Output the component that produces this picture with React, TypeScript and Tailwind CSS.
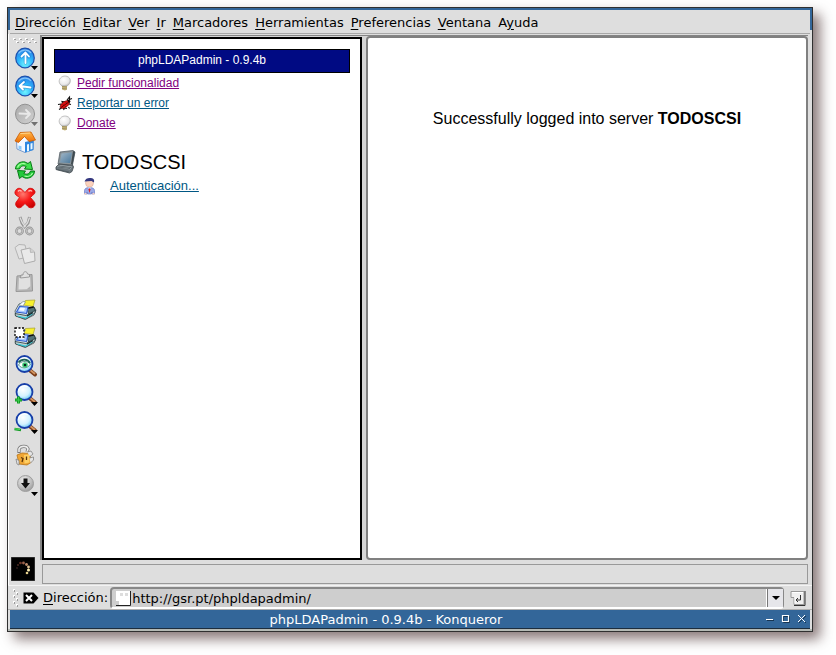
import { ReactNode } from 'react'

interface propIcon {
    children: ReactNode;
    menu?: boolean;
    disabled?: boolean;
}

interface tool {
    name: string;
    icon: ReactNode;
    disabled?: boolean;
}

const menus = [
    { before: '', key: 'D', after: 'irección' },
    { before: '', key: 'E', after: 'ditar' },
    { before: '', key: 'V', after: 'er' },
    { before: '', key: 'I', after: 'r' },
    { before: '', key: 'M', after: 'arcadores' },
    { before: '', key: 'H', after: 'erramientas' },
    { before: '', key: 'P', after: 'referencias' },
    { before: '', key: 'V', after: 'entana' },
    { before: 'A', key: 'y', after: 'uda' },
]

// Degradados que comparten los iconos
function Gradients() {
    return (
        <svg width="0" height="0" className="absolute" aria-hidden="true">
            <defs>
                <radialGradient id="blueBall" cx="0.5" cy="0.8" r="0.8">
                    <stop offset="0" stopColor="#6ff4ff" />
                    <stop offset="0.5" stopColor="#2cb4fb" />
                    <stop offset="1" stopColor="#2a78e4" />
                </radialGradient>
                <linearGradient id="grayBall" x1="0" y1="0" x2="1" y2="1">
                    <stop offset="0" stopColor="#a9a9a9" />
                    <stop offset="1" stopColor="#d2d2d2" />
                </linearGradient>
                <linearGradient id="roof" x1="0" y1="0" x2="0" y2="1">
                    <stop offset="0" stopColor="#ffb648" />
                    <stop offset="1" stopColor="#ec6a00" />
                </linearGradient>
                <radialGradient id="redCross" cx="0.4" cy="0.3" r="0.8">
                    <stop offset="0" stopColor="#ff7a70" />
                    <stop offset="0.5" stopColor="#f81818" />
                    <stop offset="1" stopColor="#c40000" />
                </radialGradient>
                <radialGradient id="lens" cx="0.4" cy="0.35" r="0.7">
                    <stop offset="0" stopColor="#ffffff" />
                    <stop offset="0.6" stopColor="#d3f2ff" />
                    <stop offset="1" stopColor="#5cc4f5" />
                </radialGradient>
                <radialGradient id="bulb" cx="0.4" cy="0.35" r="0.7">
                    <stop offset="0" stopColor="#ffffff" />
                    <stop offset="0.7" stopColor="#e9e9ea" />
                    <stop offset="1" stopColor="#b4b4b6" />
                </radialGradient>
                <radialGradient id="metal" cx="0.4" cy="0.3" r="0.8">
                    <stop offset="0" stopColor="#eeeeee" />
                    <stop offset="0.6" stopColor="#bdbdbd" />
                    <stop offset="1" stopColor="#909090" />
                </radialGradient>
                <linearGradient id="screen" x1="0" y1="0" x2="1" y2="1">
                    <stop offset="0" stopColor="#a4b8c8" />
                    <stop offset="1" stopColor="#47779c" />
                </linearGradient>
            </defs>
        </svg>
    )
}

function Icon(prop: propIcon) {
    return (
        <svg width="28" height="28" viewBox="0 0 28 28" aria-hidden="true">
            {prop.children}
            {prop.menu && <path d="M20 22h7l-3.500 4z" fill={prop.disabled ? '#707070' : '#000'} />}
        </svg>
    )
}

function Ball({ arrow }: { arrow: string }) {
    return (
        <>
            <ellipse cx="14" cy="14" rx="9.300" ry="9.800" fill="url(#blueBall)" stroke="#1c50ac" strokeWidth="1.200" />
            <path d="M7.500 9.500C10 5.500 17 4.500 20 9" fill="none" stroke="#a5dcff" strokeWidth="1.200" opacity="0.7" />
            <path d={arrow} fill="none" stroke="#1c62b8" strokeWidth="3.600" strokeLinecap="round" strokeLinejoin="round" opacity="0.4" />
            <path d={arrow} fill="none" stroke="#fff" strokeWidth="1.800" strokeLinecap="round" strokeLinejoin="round" />
        </>
    )
}

function Printer() {
    return (
        <>
            <path d="M4 15l4-7 6-2 8 4 3 4-2 5-9 4.500-9-3.500z" fill="#dfe6e8" stroke="#3c5055" strokeWidth="0.8" />
            <path d="M12 9l2.500-4.500 9.500-.5-2 6.500z" fill="#f7f02e" stroke="#a7a030" strokeWidth="0.7" />
            <path d="M8 9l4-3.500 2.500.5-2.500 4z" fill="#fafcfc" stroke="#7b8c90" strokeWidth="0.7" />
            <path d="M16 12.500l7-1.500 1.500 4-6.500 4.500z" fill="#527175" stroke="#1b2b2e" strokeWidth="0.8" />
            <path d="M17 12l5.500-1" stroke="#111" strokeWidth="1.400" />
            <path d="M5.500 16l3-5.500 8.500.5-1.500 6.500z" fill="#a9c8ff" stroke="#2c5ccc" strokeWidth="1.100" />
            <path d="M8 14.500l1.500-3 4.500.4-1 3z" fill="#f3f9ff" />
            <path d="M4 17.500l11 2 9-5v2.500l-9 6-10.500-3z" fill="#c3d1d1" stroke="#20373b" strokeWidth="0.8" />
            <path d="M6.500 20l8 2 7-4.500" fill="none" stroke="#35cbd9" strokeWidth="1.200" />
            <path d="M16 20l6-3.500" stroke="#152326" strokeWidth="1.300" />
        </>
    )
}

function Magnifier({ children }: { children?: ReactNode }) {
    return (
        <>
            <path d="M18.500 18l5.500 4.500" stroke="#7a3c18" strokeWidth="4" strokeLinecap="round" />
            <path d="M18.500 17.500l5 4" stroke="#d39661" strokeWidth="1.800" strokeLinecap="round" />
            <circle cx="13.500" cy="12" r="8" fill="url(#lens)" stroke="#183fa8" strokeWidth="1.800" />
            <path d="M7.500 11.500a6.200 6.200 0 0 1 9-5" fill="none" stroke="#fff" strokeWidth="1.200" />
            {children}
        </>
    )
}

const tools: tool[] = [
    { name: 'Arriba', icon: <Icon menu><Ball arrow="M14.500 19V9M10.500 12.500l4-4 3.500 4" /></Icon> },
    { name: 'Atrás', icon: <Icon menu><Ball arrow="M19.500 15.500L9 14M13 10l-4.500 4 3.500 3.500" /></Icon> },
    {
        name: 'Adelante', disabled: true, icon: (
            <Icon menu disabled>
                <ellipse cx="14" cy="14" rx="9.500" ry="9.800" fill="url(#grayBall)" stroke="#929292" />
                <path d="M8.500 13.500L19 14M15 10l4 4-4 4" fill="none" stroke="#e9e9e9" strokeWidth="1.800" strokeLinecap="round" strokeLinejoin="round" />
            </Icon>
        )
    },
    {
        name: 'Inicio', icon: (
            <Icon>
                <path d="M5.500 13l8-4.500 9 4.500-.5 8.500-8 3-8-3.500z" fill="#f4f8ff" stroke="#5c87c4" strokeWidth="0.8" />
                <path d="M14 14l8.500-2v10l-8.500 2.500z" fill="#3088e0" />
                <path d="M16 16.500l2-.5v7l-2 .5zM19.500 15.500l2-.5v6l-2 .5z" fill="#e9f8ff" />
                <path d="M7.500 17.500l3 .8v3.700l-3-1z" fill="#8acafb" />
                <path d="M4 13l5-8.500L20 4l4.500 8-6.500 1.500-4.500-5L7.500 14.500z" fill="url(#roof)" stroke="#c95a00" strokeWidth="0.8" />
                <path d="M9.500 5.500l9.500-.5" stroke="#ffd58c" />
            </Icon>
        )
    },
    {
        name: 'Recargar', icon: (
            <Icon>
                <path d="M4.500 13c0-5 5-8 9.500-7l3 1.500 2.500-2 2 8-8-.5 1.700-2.500c-3-1.500-5.700-.5-6.700 2.500z" fill="#3fe04c" stroke="#087a16" />
                <path d="M23.500 15c0 5-5 8-9.500 7l-3-1.500-2.500 2-2-8 8 .5-1.700 2.500c3 1.500 5.700.5 6.700-2.500z" fill="#22c93a" stroke="#087a16" />
                <path d="M6.500 11.500c1.500-3.500 5-4.500 8-3.500M21.500 17c-1.500 3-5 4-8 3" fill="none" stroke="#b6ffae" strokeWidth="1.200" />
            </Icon>
        )
    },
    {
        name: 'Detener', icon: (
            <Icon>
                <path d="M5 6C6.500 3.500 10 4 11.500 6l2.500 2.500 2.500-3c1.500-2 5.500-1.500 7 1 1.500 2-.5 4-2 5L19.500 13.500l3 3.500c2 2 2 4.500 0 6s-4.500 1-6-1L14 19.500l-3 3c-1.500 1.500-4 2-5.500 0s-1-4 .5-5.500l2.500-3.500L5 11c-1.500-1.500-1.500-3 0-5z" fill="url(#redCross)" stroke="#d40808" strokeWidth="0.8" />
                <path d="M7 7.500c1-1.500 2.500-1.500 3.500 0M17.500 7.500c1-1.500 3-1 3.500 0" fill="none" stroke="#ffb2ac" strokeWidth="1.400" />
            </Icon>
        )
    },
    {
        name: 'Cortar', disabled: true, icon: (
            <Icon>
                <path d="M9 5l2 6 3 4.500M18.500 5L17 11l-4.500 5" fill="none" stroke="#949494" strokeWidth="3" />
                <path d="M9 5.500l2.500 5.500 3 4M18.500 5.500L16.500 11l-4 4.500" fill="none" stroke="#dedede" strokeWidth="1.300" />
                <circle cx="8.500" cy="19" r="3.200" fill="none" stroke="#989898" strokeWidth="2.400" />
                <circle cx="18.500" cy="19" r="3.200" fill="none" stroke="#989898" strokeWidth="2.400" />
                <circle cx="8.500" cy="19" r="3.200" fill="none" stroke="#cacaca" strokeWidth="0.8" />
                <circle cx="18.500" cy="19" r="3.200" fill="none" stroke="#cacaca" strokeWidth="0.8" />
            </Icon>
        )
    },
    {
        name: 'Copiar', disabled: true, icon: (
            <Icon>
                <path d="M4 7.500l4-3 6 .5 3 12-9 2z" fill="#e3e3e3" stroke="#b4b4b4" />
                <path d="M10 10l9-2 4.500 4 .5 9-10.500 2.500z" fill="#e9e9e9" stroke="#acacac" />
                <path d="M19 8l.5 4.500 4-.5" fill="#d2d2d2" stroke="#b0b0b0" strokeWidth="0.8" />
            </Icon>
        )
    },
    {
        name: 'Pegar', disabled: true, icon: (
            <Icon>
                <path d="M6 8l15-1.500.5 16.500L5 23.500z" fill="#b8b8b8" stroke="#989898" />
                <path d="M8 10l11-1.500.5 12.500-12 .5z" fill="#e1e1e1" />
                <path d="M9.500 10l.5-3h2c0-4 4-4.500 4.500-1l2 .5v2.500z" fill="#e0e0e0" stroke="#8c8c8c" strokeWidth="0.8" />
                <path d="M15.500 21.500l4-3.500v3.500z" fill="#b2b2b2" />
            </Icon>
        )
    },
    { name: 'Imprimir', icon: <Icon><Printer /></Icon> },
    {
        name: 'Imprimir marco', icon: (
            <Icon>
                <Printer />
                <path d="M4 4h9v9H4z" fill="#fff" stroke="#000" strokeWidth="1.300" strokeDasharray="2 1.500" />
            </Icon>
        )
    },
    {
        name: 'Buscar', icon: (
            <Icon>
                <Magnifier>
                    <path d="M7.500 13c2-4 8-5 12-1-3 5-9 5-12 1z" fill="#fff" stroke="#2b6b63" strokeWidth="0.7" />
                    <path d="M7.500 10.500c3-4 9-4 11.500.5" fill="none" stroke="#1d6253" strokeWidth="1.800" />
                    <circle cx="14" cy="13" r="2.800" fill="#3fca78" />
                    <circle cx="14" cy="13" r="1.300" fill="#04251c" />
                </Magnifier>
            </Icon>
        )
    },
    {
        name: 'Ampliar', icon: (
            <Icon menu>
                <Magnifier><path d="M4 20h7M7.500 16.500v7" stroke="#119c22" strokeWidth="3" /><path d="M4.500 20h6M7.500 17v6" stroke="#3ccc4e" /></Magnifier>
            </Icon>
        )
    },
    {
        name: 'Reducir', icon: (
            <Icon menu>
                <Magnifier><path d="M3.500 21l6.500 1" stroke="#119c22" strokeWidth="2.600" /><path d="M4 20.800l5 .7" stroke="#55dd65" /></Magnifier>
            </Icon>
        )
    },
    {
        name: 'Seguridad', icon: (
            <Icon>
                <path d="M8 11V7c1-3 8-4 9 0l-1 3" fill="none" stroke="#777" strokeWidth="3.200" />
                <path d="M8 10V7c1-3 8-4 9 0l-1 3" fill="none" stroke="#eee" strokeWidth="1.600" />
                <path d="M6 13l5-2 8 .5 1 9-4 2.500-8-1z" fill="#f0a634" stroke="#b87316" strokeWidth="0.8" />
                <path d="M13 13l5-.5.500 8-5 1z" fill="#ffcf62" />
                <path d="M10 15.500l2 1-1 3.500M15.500 14.500v3.500" fill="none" stroke="#5a3508" strokeWidth="1.300" />
                <path d="M16 10l4-1 2 3-3 2.500M18.500 16l4-1v3l-3 3M5 17l3 1.500v4.500l-2-1z" fill="#e5e5e5" stroke="#858585" strokeWidth="0.8" />
            </Icon>
        )
    },
    {
        name: 'Descargar', icon: (
            <Icon menu>
                <circle cx="14.500" cy="13.500" r="8" fill="url(#metal)" stroke="#a0a0a0" />
                <path d="M12.500 8.500h4v4.500h2.500l-4.500 5.500-4.500-5.500h2.500z" fill="#111" />
            </Icon>
        )
    },
]

function Bulb() {
    return (
        <svg width="16" height="16" viewBox="0 0 16 16" aria-hidden="true">
            <path d="M5 11C1.500 8.500 1.500 5 3.500 3c2.500-3 8-2.500 9.500 1 1 3-.5 5.500-3 7z" fill="url(#bulb)" stroke="#aaa" strokeWidth="0.7" />
            <path d="M5 11h5v3.500l-2 1-3-1z" fill="#c6b375" />
            <path d="M5 11.500l5 .5M5 13.500l5 .5" stroke="#8b8360" strokeWidth="0.7" />
        </svg>
    )
}

function Bug() {
    return (
        <svg width="16" height="16" viewBox="0 0 16 16" aria-hidden="true">
            <path d="M1 9.500l3-.5 1 2M2 14.500l2.500-1.500M7 15l-.5-2 3.500.5M11.500 12l1 1.500M5.500 8L5 6.500l3 .5M10 5L12.500 2v2.500L15 3.500M12 9l2 .5" fill="none" stroke="#101010" strokeWidth="1.100" />
            <path d="M3 12.500c0-3.500 4-6.500 7.500-7 2 1 2.500 2.500 1 4.500-2.500 3-6.500 4.500-8.500 2.500z" fill="#e01010" stroke="#5c0505" strokeWidth="0.6" />
            <path d="M10 5l2.500-.5 1 2-1.500 2z" fill="#190505" />
            <path d="M4 12.500l7-5M6 9.500l.8.800M9 7.500l.8.800M8.500 12l.5-.8" stroke="#3d0202" strokeWidth="0.8" />
        </svg>
    )
}

function Computer() {
    return (
        <svg width="24" height="26" viewBox="0 0 24 26" aria-hidden="true">
            <path d="M6 3l13-1.500L21 3l-2.500 13L4 15z" fill="#89949a" stroke="#566067" strokeWidth="0.8" />
            <path d="M7.500 4.500l10.500-1L16 14l-10-.5z" fill="url(#screen)" />
            <path d="M19 2l2 1-2.500 13-1.500-1z" fill="#3f4a50" />
            <path d="M2 18l3-3 14 1.500.5 1.500-1.500 4.500-2.500 1.500L2 20.500z" fill="#6c777d" stroke="#40494e" strokeWidth="0.8" />
            <path d="M3 18l3-2 12 1.500-2 3z" fill="#a9b4b9" />
            <path d="M4 18l12 1.500M5 17l12 1.500M3 20.500l12 2.500" stroke="#4d585e" strokeWidth="0.8" />
        </svg>
    )
}

function Person() {
    return (
        <svg width="16" height="18" viewBox="0 0 16 18" aria-hidden="true">
            <circle cx="7.500" cy="6" r="4" fill="#fbd2bd" stroke="#d9a896" strokeWidth="0.6" />
            <path d="M2.500 4.500C3.500 1.500 6 .5 9 1c3 .3 3.500 2 3 4.500L9.500 4z" fill="#35387f" />
            <path d="M2.500 17v-3.500c0-2 2-3 5-3s5 1 5 3V17H10v-2l-.5 2h-4L5 15v2z" fill="#9aa8e6" stroke="#6c79c4" strokeWidth="0.7" />
            <path d="M6 10.500h3l-1.500 2z" fill="#fff" />
            <path d="M7.500 11l1 1.500-1 3.500-1-3.500z" fill="#d22" />
            <path d="M2.500 16h2v1.500h-2zM10.500 16h2v1.500h-2z" fill="#fbd2bd" />
        </svg>
    )
}

export default function App() {
    return (
        <div className="h-screen pt-[7px] pl-[7px] pr-[23px] pb-[23px] bg-white font-['DejaVu_Sans',sans-serif] text-[13px] leading-4 text-black overflow-hidden">
            <Gradients />
            <div className="h-full flex flex-col border border-[#303030] bg-[#dedede] shadow-[7px_7px_12px_rgba(75,50,50,0.65)]">
                <header className="flex items-start border-t-2 border-[#336699]">
                    <div className="w-0.5 h-5 bg-[#336699]"></div>
                    <nav className="flex-1 h-6 flex items-center gap-[7px] pt-0.5 pl-[5px] border-b border-[#a8a8a8]">
                        {menus.map((menu) => (
                            <button key={menu.key + menu.after} className="whitespace-nowrap">
                                {menu.before}<span className="underline underline-offset-2">{menu.key}</span>{menu.after}
                            </button>
                        ))}
                    </nav>
                    <div className="w-0.5 h-5 bg-[#336699]"></div>
                </header>

                <div className="flex-1 min-h-0 flex border-l border-white pt-px">
                    <aside className="w-[31px] flex flex-col shrink-0 pl-px">
                        <svg width="26" height="9" viewBox="0 0 26 9" className="ml-0.5 shrink-0" aria-hidden="true">
                            {[1, 7, 13, 19].map((x) => (
                                <g key={x}>
                                    <path d={`M${x} 3h2v2h-2zM${x + 3} 6h2v2h-2z`} fill="#fff" />
                                    <path d={`M${x + 1} 4h2v1h-2zM${x + 4} 7h2v1h-2z`} fill="#a0a0a0" />
                                </g>
                            ))}
                        </svg>
                        {tools.map((tool) => (
                            <button key={tool.name} aria-label={tool.name} disabled={tool.disabled} className={tool.name === 'Seguridad' ? 'h-7 mt-1.5 flex justify-center shrink-0' : 'h-7 flex justify-center shrink-0'}>
                                {tool.icon}
                            </button>
                        ))}
                        <div className="mt-auto mb-1 ml-px">
                            <svg width="24" height="24" viewBox="0 0 24 24" aria-hidden="true">
                                <path d="M0 0h24v24H0z" fill="#000" />
                                <path d="M0 0h24v24H0z" fill="none" stroke="#555" />
                                <circle cx="6" cy="11" r="1" fill="#281818" />
                                <circle cx="7" cy="8" r="1" fill="#4a2820" />
                                <circle cx="9.500" cy="6" r="1.300" fill="#70382a" />
                                <circle cx="12.500" cy="6" r="1.400" fill="#9b624b" />
                                <circle cx="15.500" cy="7.500" r="1.400" fill="#bd8b6b" />
                                <circle cx="17.500" cy="10" r="1.400" fill="#dec092" />
                                <circle cx="17.500" cy="13" r="1.500" fill="#fff0b5" />
                                <circle cx="16" cy="16" r="1.300" fill="#e4cf8b" />
                            </svg>
                        </div>
                    </aside>

                    <div className="flex-1 min-w-0 flex flex-col pr-1">
                        <main className="flex-1 min-h-0 flex gap-1 border-t border-l-2 border-[#858585] bg-[#d5d5d5]">
                            <section className="w-80 shrink-0 mt-px bg-white border-2 border-black px-2.5 pt-2.5 font-['Liberation_Sans',sans-serif]">
                                <h1 className="h-6 bg-[#000a83] border border-black text-white text-center text-[12px] leading-5">phpLDAPadmin - 0.9.4b</h1>
                                <ul className="px-[3px] text-[12px]">
                                    <li className="h-5 flex items-center gap-1"><Bulb /><a href="#pedir" className="underline text-[#800080]">Pedir funcionalidad</a></li>
                                    <li className="h-5 flex items-center gap-1"><Bug /><a href="#reportar" className="underline text-[#005784]">Reportar un error</a></li>
                                    <li className="h-5 flex items-center gap-1"><Bulb /><a href="#donate" className="underline text-[#800080]">Donate</a></li>
                                </ul>
                                <div className="mt-[17px] h-6 flex items-center gap-1">
                                    <Computer />
                                    <h2 className="text-[20px] leading-6">TODOSCSI</h2>
                                </div>
                                <div className="h-6 pl-7 flex items-center gap-3 text-[13px]">
                                    <Person />
                                    <a href="#login" className="underline text-[#005784]">Autenticación...</a>
                                </div>
                            </section>
                            <section className="flex-1 bg-white border-2 border-[#808080] rounded-sm pt-[71px] text-center font-['Liberation_Sans',sans-serif] text-[16px] leading-5">
                                <p>Successfully logged into server <b>TODOSCSI</b></p>
                            </section>
                        </main>
                        <div className="h-5 mt-1 mb-px ml-0.5 border border-[#999]"></div>
                    </div>
                </div>

                <div className="h-[25px] flex items-center border-t border-[#f3f3f3] border-b border-b-[#b0b0b0] pl-1 pr-1">
                    <svg width="9" height="22" viewBox="0 0 9 22" className="shrink-0" aria-hidden="true">
                        {[2, 8, 14].map((y) => (
                            <g key={y}>
                                <path d={`M1 ${y}h2v2h-2zM4 ${y + 3}h2v2h-2z`} fill="#fff" />
                                <path d={`M2 ${y + 1}h1v2h-1zM5 ${y + 4}h1v2h-1z`} fill="#999" />
                            </g>
                        ))}
                    </svg>
                    <button aria-label="Limpiar" className="ml-0.5 mr-1">
                        <svg width="16" height="12" viewBox="0 0 16 12" aria-hidden="true">
                            <path d="M.5.5h10l5 5.500-5 5.500H.5z" fill="#000" />
                            <path d="M3 3l6 6M9 3L3 9" stroke="#fff" strokeWidth="2" />
                        </svg>
                    </button>
                    <label htmlFor="direccion"><span className="underline underline-offset-2">D</span>irección:</label>
                    <div className="ml-0.5 mr-1.5 flex-1 min-w-0 h-[22px] flex items-center border-2 border-r border-b-white border-[#888] rounded-sm bg-[#cecece]">
                        <svg width="18" height="18" viewBox="0 0 18 18" className="ml-0.5 shrink-0" aria-hidden="true">
                            <path d="M2 2h14v14H5v-4H2z" fill="#fff" />
                            <path d="M2 16.500h14.500V2" fill="none" stroke="#222" />
                            <path d="M6 4h3v3H6zM11 4h3v3h-3z" fill="#ddd" />
                        </svg>
                        <input id="direccion" type="text" defaultValue="http://gsr.pt/phpldapadmin/" className="flex-1 min-w-0 pt-0.5 bg-transparent outline-none" />
                        <button aria-label="Historial" className="w-4 h-full flex items-center justify-center border-l border-[#777] bg-[#e6e6ea] shadow-[-1px_0_0_#fff]">
                            <svg width="8" height="4" viewBox="0 0 8 4" aria-hidden="true"><path d="M0 0h8L4 4z" fill="#000" /></svg>
                        </button>
                    </div>
                    <button aria-label="Ir" className="mr-0.5">
                        <svg width="16" height="16" viewBox="0 0 16 16" aria-hidden="true">
                            <path d="M1 1.500h13v13H4v-7H1z" fill="#f0f0f0" stroke="#999" />
                            <path d="M2 2.500h11M5 7v6.500" stroke="#fff" />
                            <path d="M4 15.500h11V1" fill="none" stroke="#333" />
                            <path d="M10.500 5v5H6M8 8l-2 2 2 2" fill="none" stroke="#333" />
                        </svg>
                    </button>
                </div>

                <footer className="mx-0.5 h-[19px] flex items-center bg-[#336699] border-b border-[#1d2d3d] text-white">
                    <div className="flex-1 pt-0.5 text-center">phpLDAPadmin - 0.9.4b - Konqueror</div>
                    <button aria-label="Minimizar" className="w-4 flex justify-center"><svg width="10" height="10" viewBox="0 0 10 10"><path d="M2 6.500h7" stroke="#183552" /><path d="M1 5.500h7" stroke="#fff" /></svg></button>
                    <button aria-label="Maximizar" className="w-4 flex justify-center"><svg width="10" height="10" viewBox="0 0 10 10"><path d="M2.500 2.500h6v6h-6z" fill="none" stroke="#183552" /><path d="M1.500 1.500h6v6h-6z" fill="none" stroke="#fff" strokeWidth="1.200" /></svg></button>
                    <button aria-label="Cerrar" className="w-4 flex justify-center"><svg width="10" height="10" viewBox="0 0 10 10"><path d="M2 2l7 7M9 2L2 9" stroke="#183552" /><path d="M1 1l7 7M8 1L1 8" stroke="#fff" /></svg></button>
                </footer>
                <div className="h-0.5 bg-[#b5bab5]"></div>
            </div>
        </div>
    )
}
